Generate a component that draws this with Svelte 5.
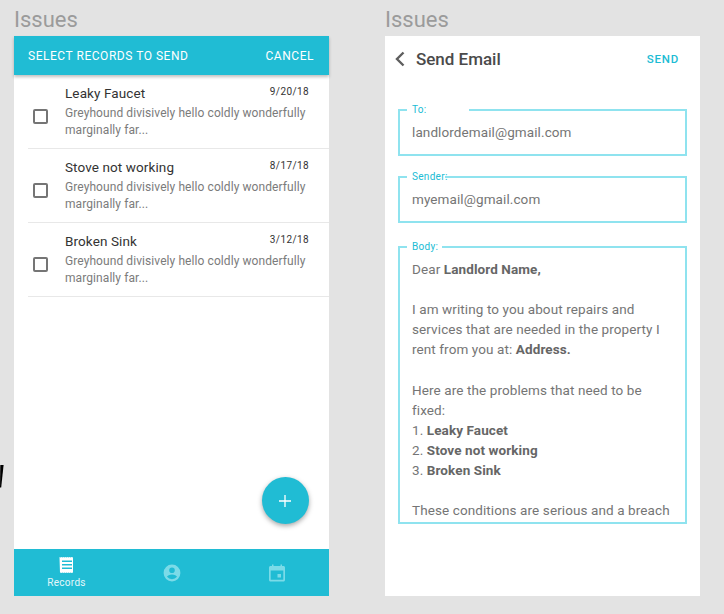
<script>
  const records = [
    { title: 'Leaky Faucet', date: '9/20/18' },
    { title: 'Stove not working', date: '8/17/18' },
    { title: 'Broken Sink', date: '3/12/18' }
  ];
  const snippet = 'Greyhound divisively hello coldly wonderfully marginally far...';
</script>

<svg class="stray" width="4" height="23" viewBox="0 0 4 23"><path d="M0.300 0H3.600L1.200 22.500H0Z" fill="#000" /></svg>

<div class="page">
  <section class="col">
    <h2>Issues</h2>
    <div class="panel list-panel">
      <header class="select-bar">
        <span>SELECT RECORDS TO SEND</span>
        <span>CANCEL</span>
      </header>
      <ul>
        {#each records as r}
          <li>
            <span class="check"></span>
            <div class="rec">
              <div class="rec-head">
                <span class="rec-title">{r.title}</span>
                <span class="rec-date">{r.date}</span>
              </div>
              <p>{snippet}</p>
            </div>
          </li>
        {/each}
      </ul>
      <div class="spacer">
        <button class="fab" aria-label="Add">
          <svg width="14" height="14" viewBox="0 0 14 14"><path d="M7 1V13M1 7H13" stroke="#fff" stroke-width="1.300" /></svg>
        </button>
      </div>
      <nav>
        <div class="tab active">
          <svg width="18" height="18" viewBox="0 0 18 18">
            <path fill="#fff" fill-rule="evenodd" d="M1.500 1l1 .6 1-.6 1 .6 1-.6 1 .6 1-.6 1 .6 1-.6 1 .6 1-.6 1 .6 1-.6 1 .6 .5-.6V17l-.5-.6-1 .6-1-.6-1 .6-1-.6-1 .6-1-.6-1 .6-1-.6-1 .6-1-.6-1 .6-1-.6-.5.6ZM4 4.500V6H14V4.500ZM4 8V9.500H14V8ZM4 11.500V13H14V11.500Z" />
          </svg>
          <span>Records</span>
        </div>
        <div class="tab">
          <svg width="18" height="18" viewBox="0 0 18 18">
            <path fill="#7bdbe8" fill-rule="evenodd" d="M9 .6a8.400 8.400 0 1 0 0 16.800A8.400 8.400 0 0 0 9 .6ZM9 3.500a2.800 2.800 0 1 1 0 5.600a2.800 2.800 0 0 1 0-5.600ZM9 10.500c2.500 0 4.600 1 5 2.300a6.500 6.500 0 0 1-10 0c.4-1.300 2.500-2.300 5-2.300Z" />
          </svg>
        </div>
        <div class="tab">
          <svg width="18" height="18" viewBox="0 0 18 18">
            <path fill="#7bdbe8" fill-rule="evenodd" d="M4 .5H5.500V2H12.500V.5H14V2H15.500C16.300 2 17 2.700 17 3.500V16C17 16.800 16.300 17.500 15.500 17.500H2.500C1.700 17.500 1 16.800 1 16V3.500C1 2.700 1.700 2 2.500 2H4ZM2.700 6.500V15.800H15.300V6.500ZM9.500 10H13V13.500H9.500Z" />
          </svg>
        </div>
      </nav>
    </div>
  </section>

  <section class="col">
    <h2>Issues</h2>
    <div class="panel email-panel">
      <header class="email-head">
        <svg width="10" height="16" viewBox="0 0 10 16"><path d="M8.500 1.500L2 8L8.500 14.500" fill="none" stroke="#5f5f5f" stroke-width="2.400" /></svg>
        <span class="email-title">Send Email</span>
        <span class="send">SEND</span>
      </header>

      <fieldset class="field first">
        <legend class="wide">To:</legend>
        <div>landlordemail@gmail.com</div>
      </fieldset>
      <fieldset class="field">
        <legend class="tight">Sender:</legend>
        <div>myemail@gmail.com</div>
      </fieldset>
      <fieldset class="field body">
        <legend>Body:</legend>
        <div class="body-text">
          <p>Dear <b>Landlord Name,</b></p>
          <p>I am writing to you about repairs and services that are needed in the property I rent from you at: <b>Address.</b></p>
          <p>Here are the problems that need to be fixed:<br />1. <b>Leaky Faucet</b><br />2. <b>Stove not working</b><br />3. <b>Broken Sink</b></p>
          <p>These conditions are serious and a breach</p>
        </div>
      </fieldset>
    </div>
  </section>
</div>

<style>
  :global(body) {
    margin: 0;
    background: #e3e3e3;
  }
  .stray {
    position: absolute;
    left: 0;
    top: 465px;
  }
  .page {
    display: flex;
    gap: 56px;
    padding: 0 24px 18px 14px;
    height: 614px;
    box-sizing: border-box;
    overflow: hidden;
    font-family: Roboto, sans-serif;
  }
  .col {
    width: 315px;
    display: flex;
    flex-direction: column;
  }
  h2 {
    margin: 0;
    height: 36px;
    font-size: 22px;
    line-height: 40px;
    font-weight: 400;
    color: #9b9b9b;
  }
  .panel {
    height: 560px;
    background: #fff;
    display: flex;
    flex-direction: column;
    box-sizing: border-box;
  }
  .select-bar {
    height: 39px;
    background: #20bcd4;
    box-shadow: 0 2px 3px rgba(0, 0, 0, 0.25);
    display: flex;
    justify-content: space-between;
    align-items: center;
    padding: 0 15px 0 14px;
    color: #fff;
    font-size: 12px;
    font-weight: 400;
    letter-spacing: 0.53px;
    flex: none;
  }
  ul {
    list-style: none;
    margin: 0;
    padding: 0 0 0 14px;
  }
  li {
    height: 74px;
    box-sizing: border-box;
    border-bottom: 1px solid #e8e8e8;
    display: flex;
    align-items: center;
  }
  .check {
    width: 15px;
    height: 15px;
    border: 2px solid #757575;
    border-radius: 2px;
    box-sizing: border-box;
    margin: 10px 17px 0 5px;
    flex: none;
  }
  .rec {
    flex: 1;
    min-width: 0;
    padding-right: 20px;
    align-self: flex-start;
  }
  .rec-head {
    display: flex;
    justify-content: space-between;
    height: 24px;
    padding-top: 9px;
    margin-bottom: 2px;
  }
  .rec-title {
    font-size: 13.500px;
    line-height: 18px;
    letter-spacing: 0.1px;
    color: #333;
  }
  .rec-date {
    font-size: 10px;
    line-height: 12px;
    letter-spacing: 0.4px;
    color: #333;
    margin-top: 2px;
  }
  .rec p {
    margin: -5px 0 0;
    font-size: 12px;
    line-height: 17px;
    letter-spacing: 0.08px;
    color: #7b7b7b;
  }
  .spacer {
    flex: 1;
    display: flex;
    justify-content: flex-end;
    align-items: flex-end;
    padding: 0 20px 25px 0;
  }
  .fab {
    width: 47px;
    height: 47px;
    border: 0;
    padding: 0 1px 0 0;
    border-radius: 50%;
    background: #20bcd4;
    box-shadow: 0 2px 5px rgba(0, 0, 0, 0.35);
    display: flex;
    align-items: center;
    justify-content: center;
  }
  nav {
    height: 47px;
    background: #20bcd4;
    display: grid;
    grid-template-columns: repeat(3, 1fr);
    flex: none;
  }
  .tab {
    display: flex;
    flex-direction: column;
    align-items: center;
    justify-content: center;
    color: #e4f7fa;
    font-size: 10px;
    letter-spacing: 0.3px;
  }
  .tab svg {
    flex: none;
  }
  .tab.active {
    justify-content: flex-start;
    padding-top: 7px;
    line-height: 17px;
  }
  .email-panel {
    padding: 0 13px;
  }
  .email-head {
    height: 46px;
    display: flex;
    align-items: center;
    flex: none;
  }
  .email-head svg {
    margin: 0 11px 0 -3px;
  }
  .email-title {
    flex: 1;
    font-size: 17px;
    font-weight: 500;
    letter-spacing: -0.02px;
    color: #4a4a4a;
  }
  .send {
    font-size: 11.500px;
    font-weight: 500;
    letter-spacing: 0.8px;
    color: #20bcd4;
    margin-right: 8px;
  }
  .field {
    margin: 15px 0 0;
    padding: 0;
    border: 2px solid #8fe3ef;
    height: 52px;
    box-sizing: border-box;
    font-size: 13.500px;
    letter-spacing: 0.1px;
    color: #757575;
  }
  .field.first {
    margin-top: 22px;
  }
  legend {
    font-size: 10px;
    line-height: 12px;
    letter-spacing: 0.3px;
    color: #20bcd4;
    padding: 0 4px 0 5px;
    margin-left: 7px;
    white-space: nowrap;
  }
  legend.wide {
    width: 62px;
    box-sizing: border-box;
  }
  legend.tight {
    width: 38px;
    box-sizing: border-box;
    padding-right: 0;
  }
  .field > div {
    margin-top: 6px;
    padding: 0 12px;
    line-height: 20px;
  }
  .field.body {
    height: 283px;
    margin-top: 18px;
    overflow: hidden;
  }
  .body-text p {
    margin: 0 0 20.100px;
  }
  .field > .body-text {
    line-height: 20.100px;
  }
  b {
    font-weight: 700;
    color: #666;
  }
</style>
